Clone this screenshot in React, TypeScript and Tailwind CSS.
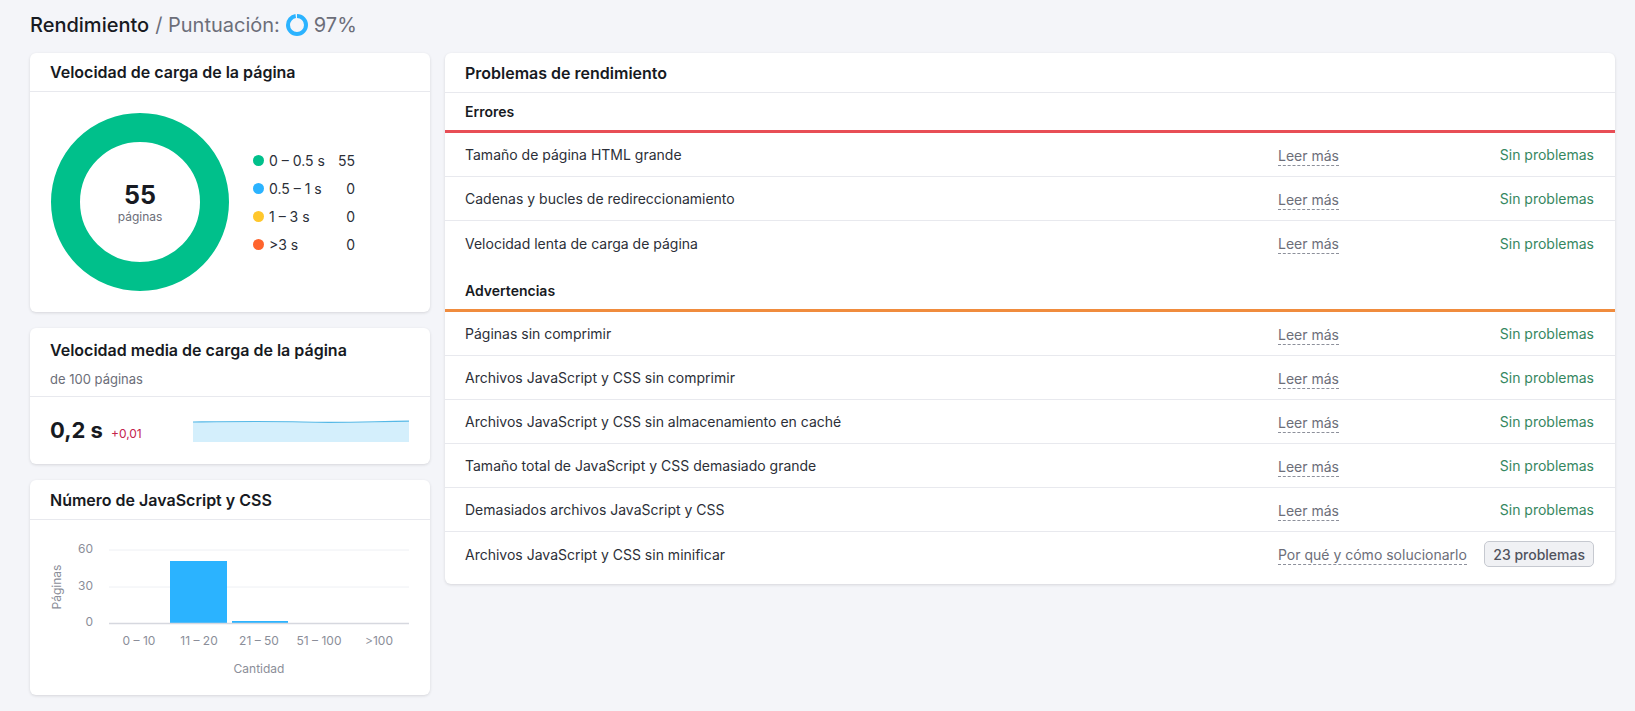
import React from "react";

const errors = [
  "Tamaño de página HTML grande",
  "Cadenas y bucles de redireccionamiento",
  "Velocidad lenta de carga de página",
];

const warnings: { name: string; issues?: number }[] = [
  { name: "Páginas sin comprimir" },
  { name: "Archivos JavaScript y CSS sin comprimir" },
  { name: "Archivos JavaScript y CSS sin almacenamiento en caché" },
  { name: "Tamaño total de JavaScript y CSS demasiado grande" },
  { name: "Demasiados archivos JavaScript y CSS" },
  { name: "Archivos JavaScript y CSS sin minificar", issues: 23 },
];

const legend = [
  { color: "bg-[#00c08b]", label: "0 – 0.5 s", value: "55" },
  { color: "bg-[#2bb3ff]", label: "0.5 – 1 s", value: "0" },
  { color: "bg-[#ffc72c]", label: "1 – 3 s", value: "0" },
  { color: "bg-[#ff642d]", label: ">3 s", value: "0" },
];

function Card({ children, className = "" }: { children: React.ReactNode; className?: string }) {
  return (
    <div className={"bg-white rounded-md shadow-[0_1px_3px_rgba(25,27,35,0.14)] " + className}>
      {children}
    </div>
  );
}

function ScoreRing() {
  const r = 9;
  const c = 2 * Math.PI * r;
  return (
    <svg width="24" height="24" viewBox="0 0 24 24" className="ml-[5px] mr-[5px]">
      <circle
        cx="12"
        cy="12"
        r={r}
        fill="none"
        stroke="#2bb3ff"
        strokeWidth="4"
        strokeDasharray={`${c * 0.97} ${c}`}
        transform="rotate(-90 12 12)"
      />
    </svg>
  );
}

function Row({ name, issues, last }: { name: string; issues?: number; last?: boolean }) {
  return (
    <div className={"h-[44px] flex items-center pl-5 pr-[21px] " + (last ? "" : "border-b border-[#e8e9ee]")}>
      <div className="flex-1 text-[14px] text-[#2c2f38]">{name}</div>
      <div className="w-[206px] shrink-0">
        <span className="inline-block leading-[18px] text-[14px] text-[#6c6e79] border-b border-dashed border-[#8d909b] whitespace-nowrap">
          {issues ? "Por qué y cómo solucionarlo" : "Leer más"}
        </span>
      </div>
      <div className="w-[110px] shrink-0 flex justify-end">
        {issues ? (
          <span className="h-[26px] px-[8px] flex items-center whitespace-nowrap rounded-[5px] bg-[#f0f1f4] border border-[#c6c9d0] text-[14px] font-medium text-[#50535d]">
            {issues} problemas
          </span>
        ) : (
          <span className="text-[14px] text-[#36875f] whitespace-nowrap">Sin problemas</span>
        )}
      </div>
    </div>
  );
}

function Donut() {
  return (
    <div className="relative w-[178px] h-[178px]">
      <svg width="178" height="178" viewBox="0 0 178 178">
        <circle cx="89" cy="89" r="74.5" fill="none" stroke="#00c08b" strokeWidth="29" />
      </svg>
      <div className="absolute inset-0 flex flex-col items-center justify-center">
        <span className="text-[25px] leading-[28px] font-bold text-[#171a22]">55</span>
        <span className="text-[12px] leading-[14px] text-[#6c6e79] mt-[1px]">páginas</span>
      </div>
    </div>
  );
}

function Sparkline() {
  return (
    <svg width="216" height="22" viewBox="0 0 216 22">
      <path d="M0 2 C 40 1.5, 70 1, 110 2 S 180 1.5, 216 1.2 L216 22 L0 22 Z" fill="#d4effc" />
      <path d="M0 2 C 40 1.5, 70 1, 110 2 S 180 1.5, 216 1.2" fill="none" stroke="#55b8e6" strokeWidth="1.2" />
    </svg>
  );
}

function BarChart() {
  const labels = ["0 – 10", "11 – 20", "21 – 50", "51 – 100", ">100"];
  const centers = [109, 169, 229, 289, 349];
  const gray = "#8b8e99";
  return (
    <svg width="400" height="175" viewBox="0 0 400 175" fontFamily="Inter, sans-serif">
      <text x="28" y="67" fontSize="12" fill={gray} textAnchor="middle" transform="rotate(-90 28 67)" dominantBaseline="middle">
        Páginas
      </text>
      <text x="63" y="30" fontSize="12" fill={gray} textAnchor="end" dominantBaseline="middle">60</text>
      <text x="63" y="67" fontSize="12" fill={gray} textAnchor="end" dominantBaseline="middle">30</text>
      <text x="63" y="103" fontSize="12" fill={gray} textAnchor="end" dominantBaseline="middle">0</text>
      <line x1="79" y1="30" x2="379" y2="30" stroke="#eef0f4" strokeWidth="1" />
      <line x1="79" y1="67" x2="379" y2="67" stroke="#eef0f4" strokeWidth="1" />
      <rect x="140" y="41" width="57" height="62" fill="#2bb3ff" />
      <rect x="202" y="101" width="56" height="2" fill="#2bb3ff" />
      <line x1="79" y1="103.5" x2="379" y2="103.5" stroke="#d6d8df" strokeWidth="1.5" />
      {labels.map((l, i) => (
        <text key={l} x={centers[i]} y="122" fontSize="12" fill={gray} textAnchor="middle" dominantBaseline="middle">
          {l}
        </text>
      ))}
      <text x="229" y="150" fontSize="12" fill={gray} textAnchor="middle" dominantBaseline="middle">
        Cantidad
      </text>
    </svg>
  );
}

export default function App() {
  return (
    <div className="min-h-[711px] bg-[#f4f5f9] pl-[30px] pr-[20px] pt-[11px] font-['Inter',sans-serif]">
      <div className="flex items-center h-7 text-[20px] leading-7">
        <span className="font-medium text-[#171a22]">Rendimiento</span>
        <span className="text-[#6c6e79] ml-[6px]">/ Puntuación:</span>
        <ScoreRing />
        <span className="text-[#6c6e79]">97%</span>
      </div>

      <div className="flex items-start gap-[15px] mt-[14px]">
        <div className="w-[400px] flex flex-col gap-4">
          <Card>
            <div className="h-[39px] flex items-center px-5 border-b border-[#e8e9ee] text-[16px] font-semibold text-[#171a22]">
              Velocidad de carga de la página
            </div>
            <div className="h-[220px] flex items-center pl-[21px]">
              <Donut />
              <div className="ml-[24px] flex flex-col">
                {legend.map((l) => (
                  <div key={l.label} className="h-[28px] flex items-center text-[14px] text-[#2c2f38]">
                    <span className={"w-[11px] h-[11px] rounded-full " + l.color} />
                    <span className="w-[60px] ml-[5px]">{l.label}</span>
                    <span className="w-[26px] text-right">{l.value}</span>
                  </div>
                ))}
              </div>
            </div>
          </Card>

          <Card>
            <div className="pt-3 pb-2 px-5 border-b border-[#e8e9ee]">
              <div className="text-[16px] leading-5 font-semibold text-[#171a22]">Velocidad media de carga de la página</div>
              <div className="mt-[10px] text-[13px] leading-[18px] text-[#6c6e79]">de 100 páginas</div>
            </div>
            <div className="h-[67px] flex items-center pl-5 pr-[21px]">
              <div className="flex items-baseline">
                <span className="text-[22px] font-bold text-[#171a22]">0,2 s</span>
                <span className="ml-[8px] text-[12px] text-[#c4234d]">+0,01</span>
              </div>
              <div className="ml-auto">
                <Sparkline />
              </div>
            </div>
          </Card>

          <Card>
            <div className="h-[40px] flex items-center px-5 border-b border-[#e8e9ee] text-[16px] font-semibold text-[#171a22]">
              Número de JavaScript y CSS
            </div>
            <div className="h-[175px]">
              <BarChart />
            </div>
          </Card>
        </div>

        <Card className="flex-1 pb-2">
          <div className="h-[40px] flex items-center px-5 border-b border-[#e8e9ee] text-[16px] font-semibold text-[#171a22]">
            Problemas de rendimiento
          </div>
          <div className="h-[37px] flex items-center px-5 text-[14px] font-semibold text-[#171a22]">Errores</div>
          <div className="h-[3px] bg-[#e84e56]" />
          {errors.map((e, i) => (
            <Row key={e} name={e} last={i === errors.length - 1} />
          ))}
          <div className="h-[44px] pt-[7px] flex items-center px-5 text-[14px] font-semibold text-[#171a22]">Advertencias</div>
          <div className="h-[3px] bg-[#f08c3e]" />
          {warnings.map((w, i) => (
            <Row key={w.name} name={w.name} issues={w.issues} last={i === warnings.length - 1} />
          ))}
        </Card>
      </div>
    </div>
  );
}
